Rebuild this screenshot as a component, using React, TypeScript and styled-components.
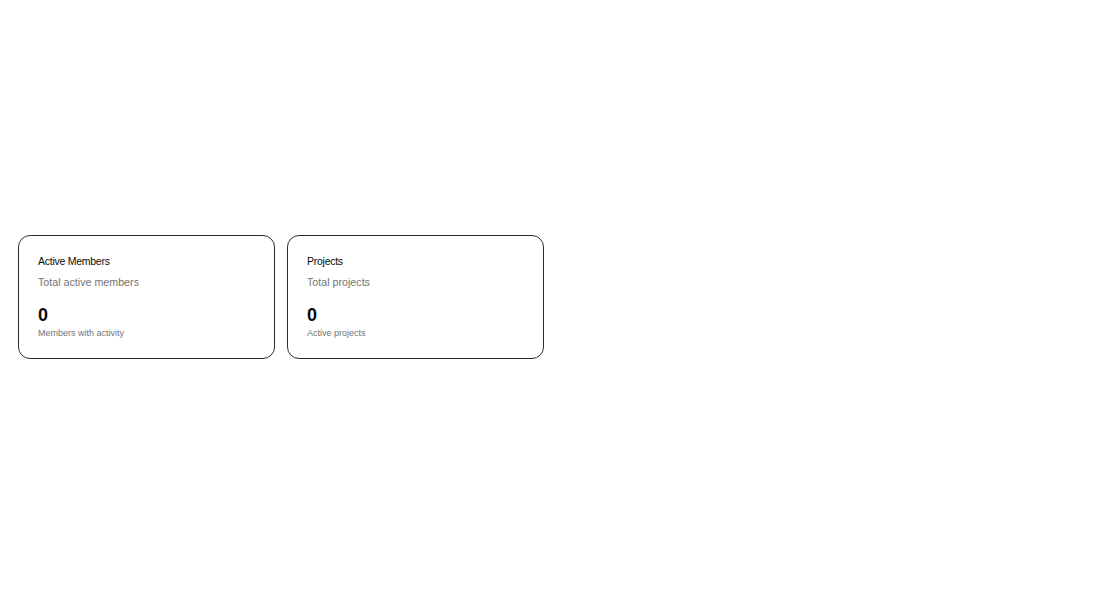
import React from "react";
import styled, { createGlobalStyle } from "styled-components";

const GlobalStyle = createGlobalStyle`
    html, body {
        margin: 0;
        padding: 0;
        background: #ffffff;
    }
    body {
        font-family: "Liberation Sans", Arial, sans-serif;
        color: #0a0a0a;
    }
`;

const Page = styled.main`
    min-height: 611px;
    box-sizing: border-box;
    padding: 235px 18px 18px 18px;
`;

const StatGrid = styled.section`
    display: grid;
    grid-template-columns: repeat(4, 1fr);
    gap: 12px;
`;

const Card = styled.div`
    display: flex;
    flex-direction: column;
    border: 1px solid #2b2b2b;
    border-radius: 12px;
    background: #ffffff;
    padding: 20px 19px 19px 19px;
`;

const CardTitle = styled.h3`
    margin: 0;
    font-size: 10.5px;
    line-height: 1;
    font-weight: 400;
    letter-spacing: -0.26px;
    color: #0a0a0a;
`;

const CardDescription = styled.p`
    margin: 8.5px 0 0 0;
    font-size: 10.7px;
    line-height: 15px;
    color: #737373;
`;

const Value = styled.div`
    margin-top: 13px;
    font-size: 18px;
    line-height: 24px;
    font-weight: 700;
    color: #0a0a0a;
`;

const Caption = styled.p`
    margin: 0;
    font-size: 9px;
    line-height: 12px;
    color: #737373;
`;

interface StatProps {
    title: string;
    description: string;
    value: number;
    caption: string;
}

const StatCard: React.FC<StatProps> = ({ title, description, value, caption }) => (
    <Card>
        <CardTitle>{title}</CardTitle>
        <CardDescription>{description}</CardDescription>
        <Value>{value}</Value>
        <Caption>{caption}</Caption>
    </Card>
);

const STATS: StatProps[] = [
    {
        title: "Active Members",
        description: "Total active members",
        value: 0,
        caption: "Members with activity",
    },
    {
        title: "Projects",
        description: "Total projects",
        value: 0,
        caption: "Active projects",
    },
];

const App: React.FC = () => (
    <>
        <GlobalStyle />
        <Page>
            <StatGrid>
                {STATS.map((stat) => (
                    <StatCard key={stat.title} {...stat} />
                ))}
            </StatGrid>
        </Page>
    </>
);

export default App;
